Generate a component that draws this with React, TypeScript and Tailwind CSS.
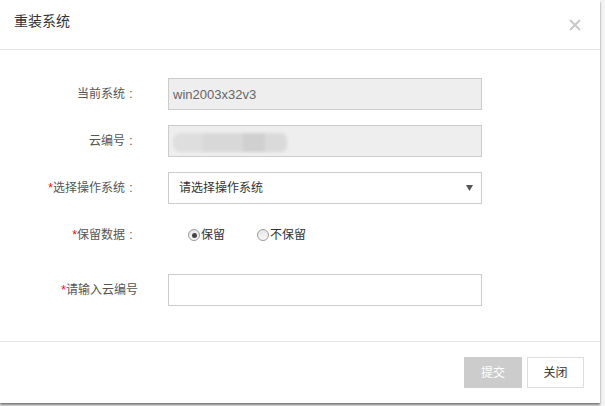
import React, { useState } from 'react';

const Label = ({ text, required, colon = true }: { text: string; required?: boolean; colon?: boolean }) => (
    <div className={`shrink-0 text-right text-[12px] text-[#555] ${colon ? 'w-[137px]' : 'w-[138px]'}`}>
        {required && <span className="text-[#ff0000]">*</span>}
        {text}
        {colon && <span className="inline-block w-[12px] text-center">:</span>}
    </div>
);

const Radio = ({ checked, label, onClick }: { checked: boolean; label: string; onClick: () => void }) => (
    <label onClick={onClick} className="flex items-center cursor-pointer text-[12px] text-[#333]">
        <span className="w-[12px] h-[12px] rounded-full border border-[#9a9a9a] bg-gradient-to-b from-[#e6e6e6] to-[#f8f8f8] flex items-center justify-center">
            {checked && <span className="w-[5px] h-[5px] rounded-full bg-[#444]" />}
        </span>
        <span className="ml-[1px]">{label}</span>
    </label>
);

const App = () => {
    let [keep, setKeep] = useState(true);
    let [cloudNo, setCloudNo] = useState("");

    return (
        <div className="w-[605px] h-[406px] bg-[#f3f3f3] overflow-hidden" style={{ fontFamily: '"Liberation Sans", "Noto Sans CJK SC", sans-serif' }}>
            <div className="w-[600px] h-[403px] bg-white flex flex-col shadow-[0_2px_2px_rgba(0,0,0,0.5)]">
                {/* header */}
                <div className="h-[50px] shrink-0 border-b border-[#e5e5e5] flex items-center justify-between pl-[14px] pr-[19px]">
                    <h4 className="text-[14px] text-[#333] -mt-[6px]">重装系统</h4>
                    <svg width="12" height="12" viewBox="0 0 12 12" className="cursor-pointer">
                        <path d="M1 1L11 11M11 1L1 11" stroke="#c9c9c9" strokeWidth="2" />
                    </svg>
                </div>

                {/* form */}
                <div className="flex-1 pt-[28px]">
                    <div className="flex items-center mb-[15px]">
                        <Label text="当前系统" />
                        <input
                            readOnly
                            value="win2003x32v3"
                            className="ml-[31px] w-[314px] h-[32px] border border-[#cccccc] bg-[#eeeeee] px-[4px] text-[13px] text-[#666] outline-none"
                        />
                    </div>
                    <div className="flex items-center mb-[15px]">
                        <Label text="云编号" />
                        <div className="ml-[31px] w-[314px] h-[32px] border border-[#cccccc] bg-[#eeeeee] relative overflow-hidden">
                            {/* masked id */}
                            <div className="absolute left-[4px] top-[7px] h-[19px] w-[114px] flex blur-[1.5px]">
                                <div className="w-[30px] bg-[#dedede] rounded-l-[8px]" />
                                <div className="w-[40px] bg-[#d8d8d8]" />
                                <div className="w-[22px] bg-[#d0d0d0]" />
                                <div className="w-[22px] bg-[#dadada] rounded-r-[6px]" />
                            </div>
                        </div>
                    </div>
                    <div className="flex items-center mb-[15px]">
                        <Label text="选择操作系统" required />
                        <div className="ml-[31px] w-[314px] h-[32px] border border-[#cccccc] bg-white flex items-center justify-between pl-[10px] pr-[8px] text-[12px] text-[#333]">
                            <span>请选择操作系统</span>
                            <svg width="7" height="6" viewBox="0 0 7 6">
                                <path d="M0 0H7L3.5 6Z" fill="#555" />
                            </svg>
                        </div>
                    </div>
                    <div className="flex items-center h-[32px] mb-[23px]">
                        <Label text="保留数据" required />
                        <div className="ml-[51px] flex items-center gap-[32px]">
                            <Radio checked={keep} label="保留" onClick={() => setKeep(true)} />
                            <Radio checked={!keep} label="不保留" onClick={() => setKeep(false)} />
                        </div>
                    </div>
                    <div className="flex items-center">
                        <Label text="请输入云编号" required colon={false} />
                        <input
                            value={cloudNo}
                            onChange={(e) => setCloudNo(e.target.value)}
                            className="ml-[30px] w-[314px] h-[32px] border border-[#cccccc] bg-white px-[6px] text-[12px] outline-none"
                        />
                    </div>
                </div>

                {/* footer */}
                <div className="h-[62px] shrink-0 border-t border-[#e5e5e5] flex items-center justify-end gap-[5px] pr-[16px]">
                    <button className="w-[58px] h-[31px] bg-[#cccccc] text-white text-[12px]">提交</button>
                    <button className="w-[57px] h-[31px] bg-white border border-[#dddddd] text-[#333] text-[12px]">关闭</button>
                </div>
            </div>
        </div>
    );
};

export default App;
